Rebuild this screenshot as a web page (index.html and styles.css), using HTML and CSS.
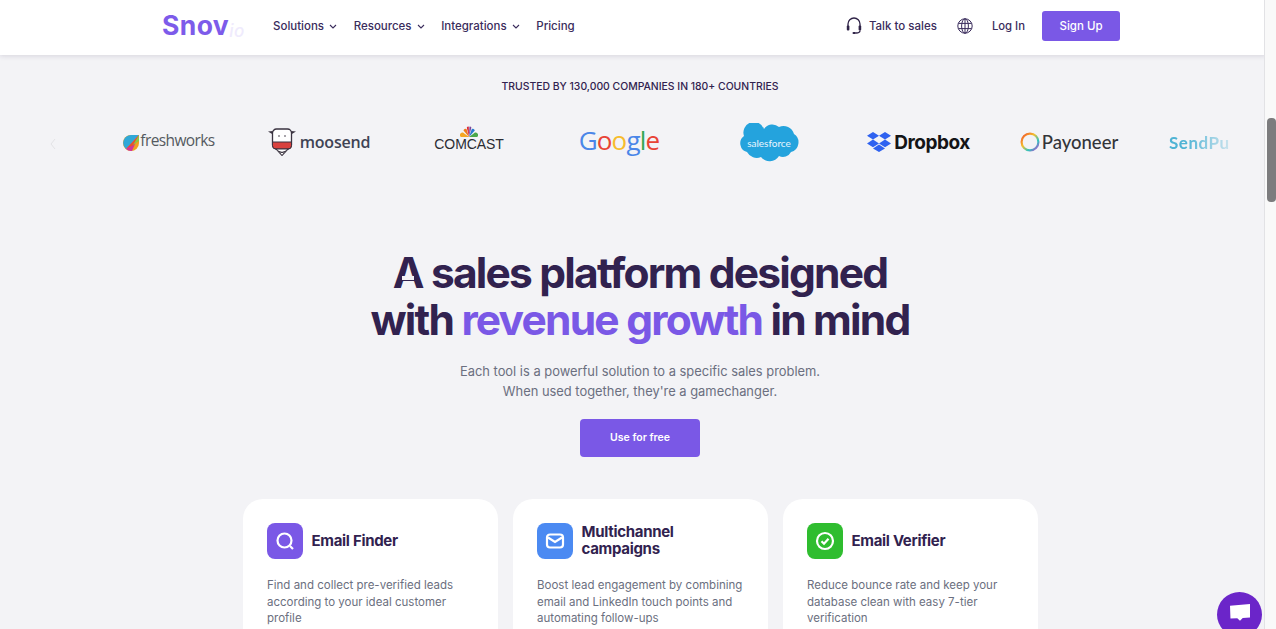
FILE: index.html
```html
<!DOCTYPE html>
<html lang="en">
<head>
<meta charset="utf-8">
<title>Snov.io</title>
<link rel="stylesheet" href="styles.css">
</head>
<body>
<div class="scrollbar"><div class="thumb"></div></div>
<div class="page">
<header class="nav">
  <div class="nav-left">
    <a class="logo">Snov<i>io</i></a>
    <nav class="menu">
      <a class="link">Solutions <svg class="chev" viewBox="0 0 8 5"><path d="M1 1l3 3 3-3"/></svg></a>
      <a class="link">Resources <svg class="chev" viewBox="0 0 8 5"><path d="M1 1l3 3 3-3"/></svg></a>
      <a class="link">Integrations <svg class="chev" viewBox="0 0 8 5"><path d="M1 1l3 3 3-3"/></svg></a>
      <a class="link">Pricing</a>
    </nav>
  </div>
  <div class="nav-right">
    <a class="link talk"><svg class="headset" viewBox="0 0 16 18"><path d="M2 10V7a6 6 0 0 1 12 0v3"/><rect x="0.8" y="8.5" width="2.6" height="5" rx="1" class="solid"/><rect x="12.6" y="8.5" width="2.6" height="5" rx="1" class="solid"/><path d="M14 13.5c0 2-1.5 2.5-4 2.5"/><rect x="6.5" y="15" width="3.5" height="2" rx="1" class="solid"/></svg>Talk to sales</a>
    <svg class="globe" viewBox="0 0 16 16"><circle cx="8" cy="8" r="7.2"/><ellipse cx="8" cy="8" rx="3.4" ry="7.2"/><path d="M8 .8v14.4M1.4 5.4h13.2M1.4 10.6h13.2"/></svg>
    <a class="link login">Log In</a>
    <a class="signup">Sign Up</a>
  </div>
</header>

<section class="trust">
  <p class="trust-title">TRUSTED BY 130,000 COMPANIES IN 180+ COUNTRIES</p>
  <div class="logos">
    <svg class="prev" viewBox="0 0 6 12"><path d="M5 1L1 6l4 5"/></svg>
    <div class="logo-cell"><span class="fresh"><svg viewBox="0 0 16 16" class="fresh-ic"><path d="M16 0v8a8 8 0 0 1-8 8 8 8 0 0 1 0-16z" fill="#f0a020"/><path d="M16 0L3 14a8 8 0 0 1 5-14z" fill="#2fa8d8"/><path d="M16 0L9 16H8a8 8 0 0 1-5-2z" fill="#d0359a"/><path d="M16 0l-5 10-7 3z" fill="#e8532a"/><path d="M16 0v6l-6 4z" fill="#8fc63f"/></svg>freshworks</span></div>
    <div class="logo-cell"><span class="moosend"><svg viewBox="0 0 28 28" class="cow"><path d="M0 3.500l5 3V3zM28 3.500l-5 3V3z" fill="#3a3340"/><rect x="4.500" y="1" width="19" height="20" rx="4" fill="#fff" stroke="#3a3340" stroke-width="1.300"/><path d="M4.500 14h19v3.500a3.500 3.500 0 0 1-3.500 3.500H8a3.500 3.500 0 0 1-3.500-3.500z" fill="#d9413e" stroke="#3a3340" stroke-width="1"/><circle cx="11" cy="8" r=".8" fill="#3a3340"/><circle cx="17" cy="8" r=".8" fill="#3a3340"/><path d="M8 21l6 6.500 6-6.500z" fill="#fff" stroke="#3a3340" stroke-width="1.100"/><path d="M10 23l6 2M18 23l-6 2" stroke="#3a3340" stroke-width=".9"/></svg>moosend</span></div>
    <div class="logo-cell"><span class="comcast"><svg viewBox="0 0 18 12" class="peacock"><path d="M9 11L1 11a2.500 2.500 0 0 1 2-4.500z" fill="#f5a623"/><path d="M9 11L3.500 4.500a2 2 0 0 1 3-1.500z" fill="#ef7a1a"/><path d="M9 11L6.800 1.500a1.800 1.800 0 0 1 2-.8z" fill="#d8263a"/><path d="M9 11l.4-10.300a1.800 1.800 0 0 1 2 .8z" fill="#7a4a9c"/><path d="M9 11l2.800-8a2 2 0 0 1 3 1.500z" fill="#2a7bd0"/><path d="M9 11l6-4.500A2.500 2.500 0 0 1 17 11z" fill="#4aa84a"/></svg><b>COMCAST</b></span></div>
    <div class="logo-cell"><span class="google"><i class="g1">G</i><i class="g2">o</i><i class="g3">o</i><i class="g1">g</i><i class="g4">l</i><i class="g2">e</i></span></div>
    <div class="logo-cell"><span class="sf"><svg viewBox="0 0 60 40" class="cloud"><path d="M25 6a10 10 0 0 1 15-2 11 11 0 0 1 15 7 10 10 0 0 1-3 18 9 9 0 0 1-12 4 11 11 0 0 1-18 1 11 11 0 0 1-14-5 9 9 0 0 1-3-16A10 10 0 0 1 25 6z" fill="#24a3dd"/></svg><em>salesforce</em></span></div>
    <div class="logo-cell"><span class="dropbox"><svg viewBox="0 0 24 20" class="db"><path d="M6 0l6 3.800-6 3.800L0 3.800zM18 0l6 3.800-6 3.800-6-3.800zM0 11.400l6-3.800 6 3.800-6 3.800zM18 7.600l6 3.800-6 3.800-6-3.800zM6 16.400l6-3.800 6 3.800-6 3.600z" fill="#2f62f0"/></svg>Dropbox</span></div>
    <div class="logo-cell"><span class="payoneer"><svg viewBox="0 0 20 20" class="ring"><defs><linearGradient id="rg" x1="0" y1="0" x2="1" y2="1"><stop offset="0" stop-color="#f0482a"/><stop offset=".4" stop-color="#f5c12c"/><stop offset=".7" stop-color="#2fc4c0"/><stop offset="1" stop-color="#c93bd0"/></linearGradient></defs><circle cx="10" cy="10" r="8.400" fill="none" stroke="url(#rg)" stroke-width="2.200"/></svg>Payoneer</span></div>
    <div class="logo-cell clip"><span class="sendpulse">SendPulse</span></div>
  </div>
</section>

<section class="hero">
  <h1><span class="cap">A</span> sales platform designed<br>with <span class="accent">revenue growth</span> in mind</h1>
  <p>Each tool is a powerful solution to a specific sales problem.<br>When used together, they're a gamechanger.</p>
  <a class="cta">Use for free</a>
</section>

<section class="cards">
  <article class="card">
    <div class="card-head"><span class="ic purple"><svg viewBox="0 0 20 20"><circle cx="9.500" cy="9.500" r="7"/><path d="M15 15l3 3"/></svg></span><h3>Email Finder</h3></div>
    <p>Find and collect pre-verified leads according to your ideal customer profile</p>
  </article>
  <article class="card">
    <div class="card-head"><span class="ic blue"><svg viewBox="0 0 20 20"><rect x="2" y="3.500" width="16" height="13" rx="3"/><path d="M3 6.500l7 4.500 7-4.500"/></svg></span><h3>Multichannel campaigns</h3></div>
    <p>Boost lead engagement by combining email and LinkedIn touch points and automating follow-ups</p>
  </article>
  <article class="card">
    <div class="card-head"><span class="ic green"><svg viewBox="0 0 20 20"><circle cx="10" cy="10" r="8"/><path d="M6.500 10.200l2.500 2.500 4.500-5"/></svg></span><h3>Email Verifier</h3></div>
    <p>Reduce bounce rate and keep your database clean with easy 7-tier verification</p>
  </article>
</section>
</div>
<div class="chat"><svg viewBox="0 0 24 22"><path d="M1 3l22-2v15l-8 .5-3 3-3-2.700-7.500.2z" fill="#fff"/></svg></div>
</body>
</html>
```

FILE: styles.css
```css
* { box-sizing: border-box; }
html, body { margin: 0; height: 100%; overflow: hidden; }
body { background: #f3f3f6; font-family: Inter, "Liberation Sans", sans-serif; color: #31224f; }
a { display: inline-block; }
.page { width: 1266px; height: 629px; overflow: hidden; }
.scrollbar { position: fixed; top: 0; right: 0; bottom: 0; width: 12px; background: #f9f9f9; border-left: 1px solid #e2e2e5; z-index: 5; }
.thumb { position: absolute; top: 118px; left: 2px; width: 9px; height: 84px; background: #7c7c7e; border-radius: 4px; }

.nav { height: 55px; background: #fff; box-shadow: 0 1px 5px rgba(40,30,70,.14); display: flex; align-items: center; justify-content: space-between; padding: 0 146px 3px 162px; position: relative; }
.nav-left, .nav-right, .menu { display: flex; align-items: center; }
.logo { font-size: 26.500px; font-weight: 700; color: #7d5bea; width: 111px; line-height: 30px; letter-spacing: .4px; padding-top: 2px; }
.logo i { font-size: 17px; font-weight: 500; color: #efebfd; letter-spacing: .6px; position: relative; top: 2px; }
.menu { gap: 16.500px; }
.link { font-size: 11.500px; font-weight: 500; color: #3a2c5c; line-height: 16px; white-space: nowrap; }
.chev { width: 8px; height: 5px; margin-left: 2px; vertical-align: 1px; }
.chev path { fill: none; stroke: #3a2c5c; stroke-width: 1.100; }
.talk { display: flex; align-items: center; gap: 7px; }
.headset { width: 16px; height: 18px; }
.headset path { fill: none; stroke: #2f2347; stroke-width: 1.300; }
.headset .solid { fill: #2f2347; }
.globe { width: 16px; height: 16px; margin: 0 19px 0 20px; }
.globe * { fill: none; stroke: #3a2c5c; stroke-width: 1; }
.link.login { font-size: 11.300px; }
.signup { width: 78px; height: 30px; line-height: 30px; text-align: center; margin-left: 17px; background: #7a58e6; color: #fff; font-size: 11.500px; font-weight: 500; border-radius: 3px; }

.trust { padding-top: 25px; }
.trust-title { margin: 0; text-align: center; font-size: 10.400px; font-weight: 500; line-height: 14px; color: #31224f; padding-left: 14px; }
.logos { height: 64px; margin-top: 16px; display: flex; align-items: center; padding-left: 94px; position: relative; }
.prev { position: absolute; left: 50px; top: 28px; width: 6px; height: 12px; fill: none; stroke: #e3e3e6; stroke-width: 1; }
.logo-cell { width: 150px; flex: none; display: flex; justify-content: center; align-items: center; }
.logo-cell span { display: inline-flex; align-items: center; white-space: nowrap; }
.fresh { font: 400 15.500px "Open Sans", sans-serif; color: #555a60; letter-spacing: -.6px; margin-top: -4px; }
.fresh-ic { width: 16px; height: 16px; margin: 5px 1px 0 0; }
.moosend { font: 600 16px "Open Sans", sans-serif; color: #3f4354; letter-spacing: -.2px; }
.cow { width: 28px; height: 28px; margin-right: 4px; }
.comcast { flex-direction: column; margin-top: -8px; }
.peacock { width: 18px; height: 12px; margin-bottom: 0; }
.comcast b { font: 400 14px "Liberation Sans", sans-serif; color: #2a2c33; letter-spacing: -.1px; line-height: 13px; }
.google { font: 500 26px "Open Sans", sans-serif; letter-spacing: -.8px; margin-top: -5px; }
.google i { font-style: normal; }
.g1 { color: #4a86e8; } .g2 { color: #e84335; } .g3 { color: #f7bc2d; } .g4 { color: #34a853; }
.sf { position: relative; width: 60px; height: 40px; justify-content: center; margin-top: 1px; }
.cloud { position: absolute; inset: 0; }
.sf em { position: relative; font: 400 10px Lato, sans-serif; color: #e8f6fd; }
.dropbox { font: 700 19px Inter, sans-serif; color: #141416; letter-spacing: -.5px; margin-left: -1px; }
.db { width: 24px; height: 20px; margin-right: 3px; }
.payoneer { font: 500 18.500px Lato, sans-serif; color: #33353a; }
.ring { width: 20px; height: 20px; margin-right: 2px; }
.clip { width: 60px; justify-content: flex-start; overflow: hidden; margin-left: 25px; }
.sendpulse { font: 700 17px Lato, sans-serif; color: #4fb3d4; -webkit-mask-image: linear-gradient(90deg, #000 20%, transparent 90%); mask-image: linear-gradient(90deg, #000 20%, transparent 90%); letter-spacing: .5px; }

.hero { text-align: center; padding-top: 75px; padding-left: 14px; }
.hero h1 { margin: 0; font-size: 42.500px; font-weight: 700; line-height: 47px; letter-spacing: -1.800px; color: #31224f; }
.hero h1 .accent { color: #7a58e6; }
.cap { position: relative; }
.cap::after { content: ""; position: absolute; left: 9px; top: 29px; width: 12px; height: 4px; background: #f3f3f6; }
.hero p { margin: 19px 0 0; font-size: 12.900px; line-height: 20px; color: #6b6f80; }
.cta { margin-top: 17px; width: 120px; height: 38px; line-height: 38px; background: #7a58e6; color: #fff; font-size: 10.500px; font-weight: 600; border-radius: 4px; }

.cards { display: flex; justify-content: center; gap: 15px; margin-top: 42px; padding-left: 15px; }
.card { width: 255px; height: 200px; background: #fff; border-radius: 20px; padding: 24px; }
.card-head { display: flex; align-items: center; gap: 8.500px; }
.ic { width: 36px; height: 36px; border-radius: 8px; display: flex; align-items: center; justify-content: center; flex: none; }
.ic svg { width: 20px; height: 20px; fill: none; stroke: #fff; stroke-width: 2.200; }
.purple { background: #7a58e6; } .blue { background: #4b8af2; } .green { background: #2fbd2f; }
.card h3 { margin: 0 0 2px; font-size: 15px; font-weight: 700; line-height: 17px; color: #31224f; letter-spacing: -.3px; }
.card p { margin: 18px 0 0; font-size: 11.500px; line-height: 16.500px; color: #6b6f80; }

.chat { position: fixed; left: 1217px; top: 592px; width: 45px; height: 45px; border-radius: 50%; background: #6b25c9; display: flex; align-items: center; justify-content: center; z-index: 6; padding-bottom: 4px; }
.chat svg { width: 22px; height: 20px; }
```
